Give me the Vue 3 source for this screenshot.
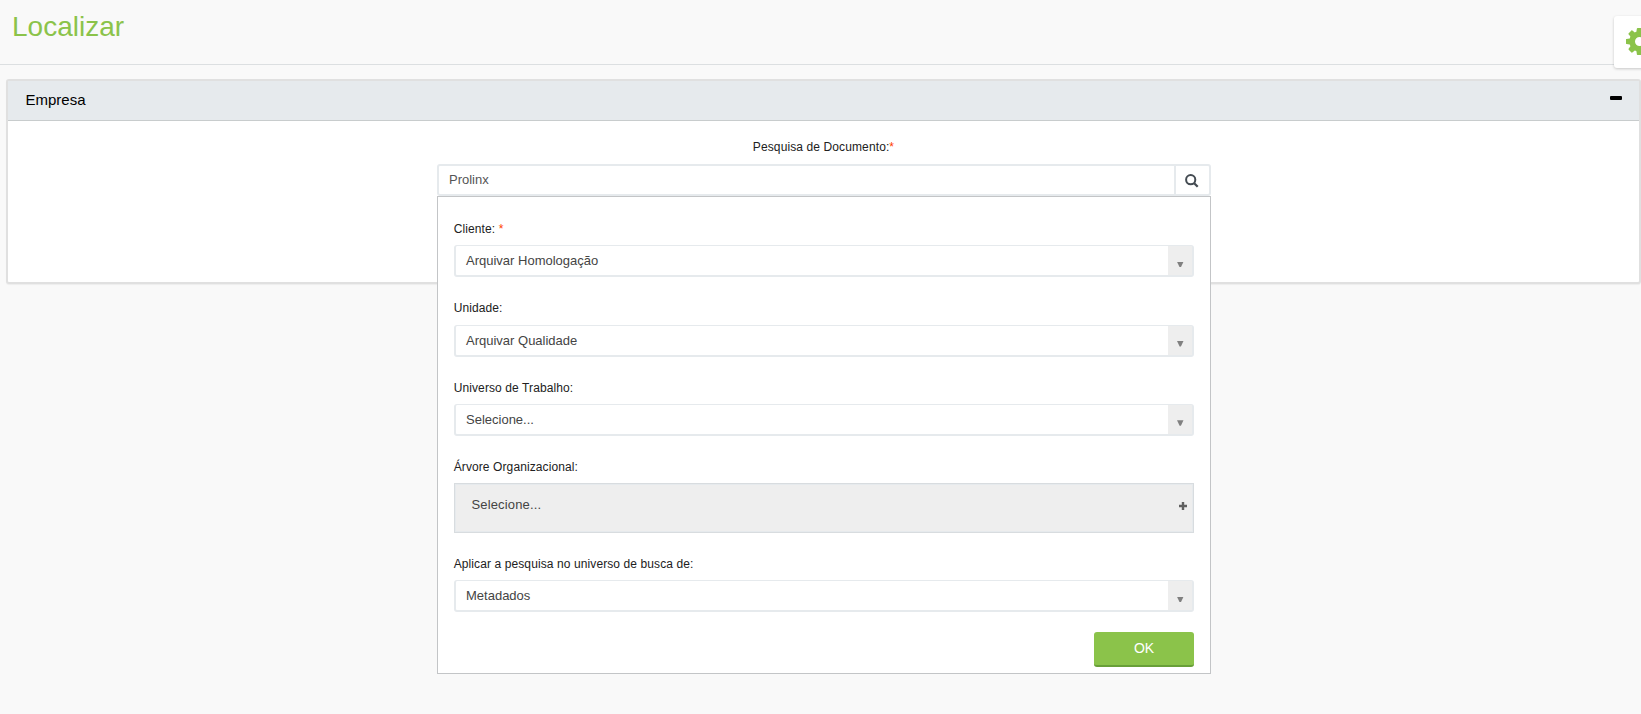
<script setup>
const fields = [
  { label: 'Cliente: ', required: true, value: 'Arquivar Homologação', type: 'select' },
  { label: 'Unidade:', value: 'Arquivar Qualidade', type: 'select' },
  { label: 'Universo de Trabalho:', value: 'Selecione...', type: 'select' },
  { label: 'Árvore Organizacional:', value: 'Selecione...', type: 'tree' },
  { label: 'Aplicar a pesquisa no universo de busca de:', value: 'Metadados', type: 'select' },
]
</script>

<template>
  <div class="page">
    <header class="top">
      <h1>Localizar</h1>
      <div class="settings">
        <svg class="gear" viewBox="0 0 1536 1536"><path fill="#8bc34a" d="M1024 768q0-106-75-181t-181-75-181 75-75 181 75 181 181 75 181-75 75-181zm512-109v222q0 12-8 23t-20 13l-185 28q-19 54-39 91 35 50 107 138 10 12 10 25t-9 23q-27 37-99 108t-94 71q-12 0-26-9l-138-108q-44 23-91 38-16 136-29 186-7 28-36 28H657q-14 0-24.500-8.500T621 1506l-28-184q-49-16-90-37l-141 107q-10 9-25 9-14 0-25-11-126-114-165-168-7-10-7-23 0-12 8-23 15-21 51-66.500t54-70.500q-27-50-41-99L29 913q-13-2-21-12.500T0 877V655q0-12 8-23t19-13l186-28q14-46 39-92-40-57-107-138-10-12-10-24 0-10 9-23 26-36 98.500-107.500T337 135q13 0 26 10l138 107q44-23 91-38 16-136 29-186 7-28 36-28h222q14 0 24.500 8.500T915 30l28 184q49 16 90 37l142-107q9-9 24-9 13 0 25 10 129 119 165 170 7 8 7 22 0 12-8 23-15 21-51 66.500t-54 70.500q26 50 41 98l183 28q13 2 21 12.500t8 23.500z" /></svg>
      </div>
    </header>

    <section class="panel">
      <div class="panel-head"><span>Empresa</span><i class="minus"></i></div>
      <div class="panel-body">
        <div class="search-label">Pesquisa de Documento:<b>*</b></div>
        <div class="search">
          <div class="search-input">Prolinx</div>
          <div class="search-btn">
            <svg width="14" height="14" viewBox="0 0 14 14"><circle cx="5.7" cy="5.7" r="4.6" /><path d="M9.200 9.200L12.700 12.700" /></svg>
          </div>
          <div class="dropdown">
            <div v-for="f in fields" :key="f.label" class="field" :class="f.type">
              <div class="label">{{ f.label }}<b v-if="f.required">*</b></div>
              <div class="control">
                <span class="value">{{ f.value }}</span>
                <span v-if="f.type === 'select'" class="arrow"></span>
                <svg v-else class="plus" width="8" height="8" viewBox="0 0 8 8"><path d="M2.800 0H5.200V2.800H8V5.200H5.200V8H2.800V5.200H0V2.800H2.800Z" /></svg>
              </div>
            </div>
            <button class="ok">OK</button>
          </div>
        </div>
      </div>
    </section>
  </div>
</template>

<style>
html, body { margin: 0; background: #f9f9f9; overflow: hidden; }
</style>

<style scoped>
* { box-sizing: border-box; }
.page { height: 714px; width: 1641px; overflow: hidden; font-family: "Liberation Sans", Arial, sans-serif; color: #212121; background: #f9f9f9; }
.top { position: relative; height: 65px; border-bottom: 1px solid #dcdfe1; padding: 11px 0 0 12px; }
h1 { margin: 0; font-size: 28px; line-height: 32px; font-weight: 400; color: #8bc34a; }
.settings { position: absolute; left: 1614px; top: 16px; width: 40px; height: 52px; background: #fff; border-radius: 3px; box-shadow: 0 1px 3px rgba(0, 0, 0, .2); padding: 11.500px 0 0 11px; }
.gear { display: block; width: 27px; height: 27px; margin-left: .5px; }
.panel { margin: 14px 0 0 6px; height: 205px; border: 2px solid #e0e0e0; border-radius: 3px; background: #fff; box-shadow: 0 1px 1px rgba(0, 0, 0, .05); }
.panel-head { display: flex; justify-content: space-between; height: 40px; background: #e6eaed; border-bottom: 1px solid #c8cccd; padding: 10px 17px 0 17.500px; font-size: 15px; line-height: 18px; color: #000; }
.minus { width: 12px; height: 4px; margin-top: 5px; border-radius: 1px; background: #000; }
.panel-body { padding: 17px 0 0 429px; }
.search-label { width: 773px; text-align: center; font-size: 12px; line-height: 18px; letter-spacing: .11px; }
b { font-weight: 400; color: #ff3d00; }
.search { position: relative; display: flex; width: 774px; height: 32px; margin-top: 8px; border: 2px solid #e6eaed; border-radius: 3px; background: #fff; }
.search-input { flex: 1; padding: 5px 0 0 10px; font-size: 13px; line-height: 18px; color: #555; }
.search-btn { width: 35px; border-left: 2px solid #e6eaed; padding: 8px 0 0 9px; }
.search-btn svg { display: block; fill: none; stroke: #444b52; stroke-width: 2; }
.search-btn path { stroke-width: 2.300; }
.dropdown { position: absolute; left: -2px; top: 30px; width: 774px; height: 478px; background: #fff; border: 1px solid #c3c5c7; padding: 23px 16px 0; }
.field { height: 79.330px; }
.field.tree { height: 97px; }
.field:nth-child(5) { height: 77px; }
.label { font-size: 12px; line-height: 18px; height: 25.200px; white-space: pre; letter-spacing: .1px; margin-left: -.3px; }
.control { display: flex; justify-content: space-between; height: 32px; border: 2px solid #e6eaed; border-top-width: 1px; border-radius: 3px; }
.value { padding: 6px 0 0 10px; font-size: 13px; line-height: 18px; color: #444; }
.arrow { width: 24px; background: #eee; padding: 15.500px 0 0 9px; }
.arrow::before { content: ""; display: block; width: 6.500px; height: 5.500px; background: #808080; clip-path: polygon(0 0, 100% 0, 60% 100%, 40% 100%); }
.tree .control { height: 50px; border: 1px solid #d8dcdf; border-radius: 0; background: #eee; box-shadow: inset 0 0 0 1px #e6eaed; }
.tree .value { padding: 12px 0 0 16.500px; letter-spacing: .15px; }
.plus { margin: 18px 6px 0 0; fill: #606060; }
.ok { display: block; width: 100px; height: 35px; margin: 0 0 0 auto; padding: 0 0 1px; border: 0; border-bottom: 2px solid #689f38; border-radius: 3px; background: #8bc34a; color: #fff; font: 14px "Liberation Sans", Arial, sans-serif; }
</style>
